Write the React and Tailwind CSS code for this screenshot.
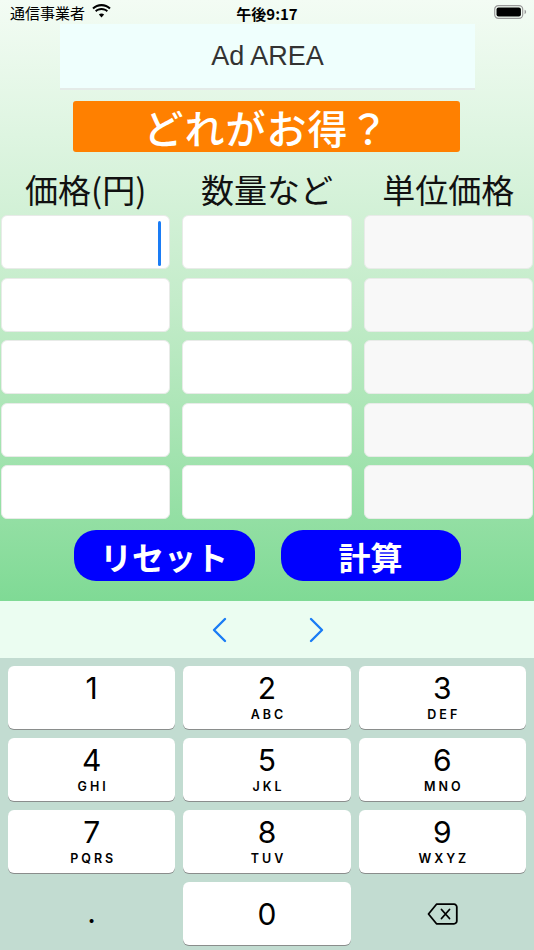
import React from 'react';

const keys = [
  { n: '1', l: '' },
  { n: '2', l: 'ABC' },
  { n: '3', l: 'DEF' },
  { n: '4', l: 'GHI' },
  { n: '5', l: 'JKL' },
  { n: '6', l: 'MNO' },
  { n: '7', l: 'PQRS' },
  { n: '8', l: 'TUV' },
  { n: '9', l: 'WXYZ' },
];

function Wifi() {
  return (
    <svg width="19" height="14" viewBox="0 0 19 14">
      <path d="M9.5 2.2c3 0 5.7 1.1 7.8 3l1.4-1.5C16.2 1.4 13 0 9.5 0S2.8 1.4.3 3.7l1.4 1.5c2.1-1.9 4.8-3 7.8-3z" fill="#000" />
      <path d="M9.5 6c2 0 3.8.7 5.1 1.9l1.4-1.5C14.3 4.8 12 3.9 9.5 3.9S4.7 4.8 3 6.4l1.4 1.5C5.7 6.7 7.5 6 9.5 6z" fill="#000" />
      <path d="M9.5 9.6c1 0 1.9.4 2.6 1L9.5 13.6 6.9 10.6c.7-.6 1.6-1 2.6-1z" fill="#000" />
    </svg>
  );
}

function Battery() {
  return (
    <svg width="33" height="14" viewBox="0 0 33 14">
      <rect x="0.7" y="0.7" width="28" height="12.6" rx="3.6" fill="none" stroke="#9a9a9a" strokeWidth="1.2" />
      <rect x="2.5" y="2.5" width="24.4" height="9" rx="2" fill="#000" />
      <path d="M30.6 4.8v4.4c.9-.3 1.5-1.2 1.5-2.2s-.6-1.9-1.5-2.2z" fill="#9a9a9a" />
    </svg>
  );
}

function Cell({ gray, cursor }) {
  return (
    <div className={`relative h-[54px] rounded-[6px] border border-[#e8ebe8] ${gray ? 'bg-[#f8f8f8]' : 'bg-white'}`}>
      {cursor && <div className="absolute right-[8px] top-[5px] w-[3px] h-[45px] rounded-full bg-[#1a7cf5]" />}
    </div>
  );
}

export default function App() {
  const rows = [0, 1, 2, 3, 4];
  return (
    <div className="w-[534px] h-[950px] flex flex-col overflow-hidden" style={{ fontFamily: '"Noto Sans CJK JP", "Noto Sans", sans-serif' }}>
      <div className="h-[601px] flex flex-col bg-gradient-to-b from-[#f3fcf4] via-[#c4ecca] to-[#7fda95]">
        {/* status bar */}
        <div className="h-[24px] relative flex items-center px-[10px] text-[15px] text-black">
          <span className="leading-none">通信事業者</span>
          <span className="ml-[7px] mt-[-2px]"><Wifi /></span>
          <span className="absolute left-0 right-0 text-center font-semibold leading-none top-[6px]">午後9:17</span>
          <span className="ml-auto mr-[-3px]"><Battery /></span>
        </div>

        {/* ad area */}
        <div className="mx-[60px] w-[415px] h-[66px] bg-[#effffd] border-b-2 border-[#e4ebe8] flex items-center justify-center">
          <span className="text-[27px] text-[#333]" style={{ fontFamily: '"Liberation Sans", Arial, sans-serif' }}>Ad AREA</span>
        </div>

        {/* banner */}
        <div className="mt-[11px] ml-[73px] w-[387px] h-[51px] rounded-[3px] bg-[#ff8000] flex items-center justify-center">
          <span className="text-[40px] font-medium text-white leading-none tracking-[1px]">どれがお得？</span>
        </div>

        {/* headers */}
        <div className="h-[63px] grid grid-cols-3 px-[1px] gap-x-[12px] items-center text-[33px] text-[#111] leading-none">
          <div className="text-center pt-[12px]">価格(円)</div>
          <div className="text-center pt-[12px]">数量など</div>
          <div className="text-center pt-[12px]">単位価格</div>
        </div>

        {/* inputs */}
        <div className="grid grid-cols-3 px-[1px] gap-x-[12px] gap-y-[8.5px]">
          {rows.map((r) => (
            <React.Fragment key={r}>
              <Cell cursor={r === 0} />
              <Cell />
              <Cell gray />
            </React.Fragment>
          ))}
        </div>

        {/* buttons */}
        <div className="mt-[11px] flex justify-center gap-[26px]">
          <button className="w-[181px] h-[51px] rounded-[22px] bg-[#0000ff] text-white text-[32px] font-bold leading-none flex items-center justify-center">
            リセット
          </button>
          <button className="w-[180px] h-[51px] rounded-[22px] bg-[#0000ff] text-white text-[32px] font-bold leading-none flex items-center justify-center">
            計算
          </button>
        </div>
      </div>

      {/* toolbar */}
      <div className="h-[57px] bg-[#ebfdf1] flex items-center justify-center gap-[82px] pl-[2px]">
        <svg width="16" height="26" viewBox="0 0 16 26">
          <path d="M14 2 L3 13 L14 24" fill="none" stroke="#1a7cf5" strokeWidth="2.4" strokeLinecap="round" strokeLinejoin="round" />
        </svg>
        <svg width="16" height="26" viewBox="0 0 16 26">
          <path d="M2 2 L13 13 L2 24" fill="none" stroke="#1a7cf5" strokeWidth="2.4" strokeLinecap="round" strokeLinejoin="round" />
        </svg>
      </div>

      {/* keyboard */}
      <div className="flex-1 bg-[#c2dcd1] pt-[8px] px-[8px]">
        <div className="grid grid-cols-3 gap-x-[8px] gap-y-[9px]">
          {keys.map((k) => (
            <div key={k.n} className="h-[63px] rounded-[6px] bg-white shadow-[0_1px_0_#8a8d8c] flex flex-col items-center pt-[5px]" style={{ fontFamily: 'Inter, "Noto Sans", sans-serif' }}>
              <span className="text-[30px] leading-[34px] text-black">{k.n}</span>
              <span className="mt-[3px] text-[12.5px] font-semibold leading-[14px] tracking-[3px] pl-[3px] text-black">{k.l}</span>
            </div>
          ))}
          <div className="h-[63px] flex items-center justify-center">
            <span className="text-[30px] leading-none text-black pb-[4px]" style={{ fontFamily: 'Inter, sans-serif' }}>.</span>
          </div>
          <div className="h-[63px] rounded-[6px] bg-white shadow-[0_1px_0_#8a8d8c] flex items-center justify-center" style={{ fontFamily: 'Inter, "Noto Sans", sans-serif' }}>
            <span className="text-[30px] leading-none text-black">0</span>
          </div>
          <div className="h-[63px] flex items-center justify-center">
            <svg width="31" height="22" viewBox="0 0 31 22">
              <path d="M9.5 1.2 H27 a2.8 2.8 0 0 1 2.8 2.8 V18 a2.8 2.8 0 0 1 -2.8 2.8 H9.5 L1.5 11 Z" fill="none" stroke="#000" strokeWidth="1.8" strokeLinejoin="round" />
              <path d="M14.5 6.5 L22.5 15.5 M22.5 6.5 L14.5 15.5" stroke="#000" strokeWidth="1.8" strokeLinecap="round" />
            </svg>
          </div>
        </div>
      </div>
    </div>
  );
}
